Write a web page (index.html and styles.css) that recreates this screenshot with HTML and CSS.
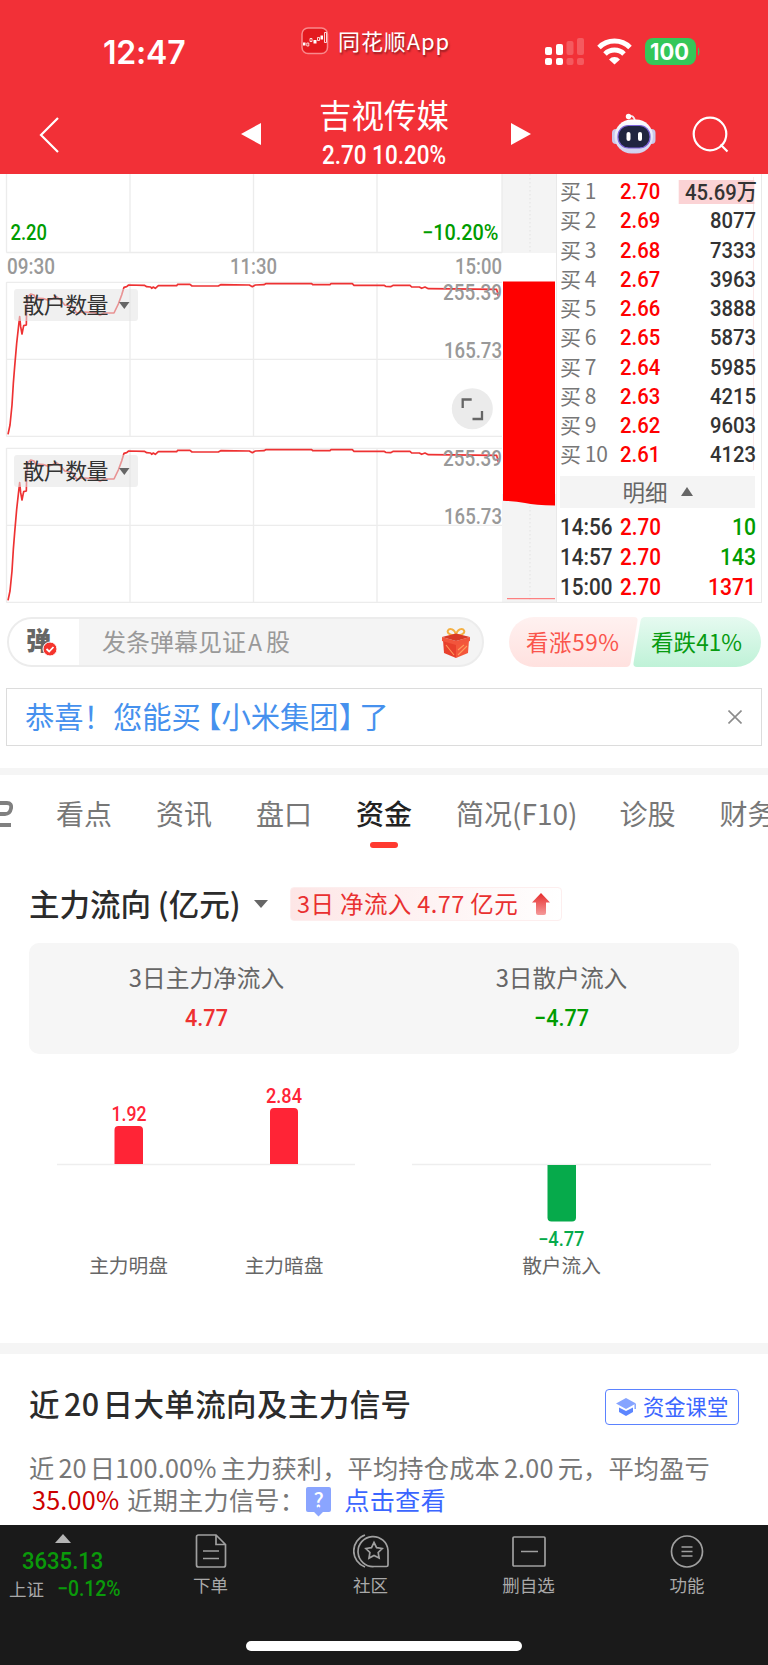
FILE: index.html
```
<!DOCTYPE html>
<html lang="zh-CN">
<head>
    <meta charset="UTF-8">
    <meta name="viewport" content="width=device-width, initial-scale=1.0">
    <title>吉视传媒</title>
    <link rel="stylesheet" href="styles.css">
</head>
<body>
    <header class="header">
        <div class="status-bar">
            <div class="clock">12:47</div>
            <div class="app-name">
                <svg width="28" height="28" viewBox="0 0 28 28">
                    <rect x="1" y="1" width="25.5" height="25.5" rx="6" fill="#e3191f" stroke="#f9898c" stroke-width="1.5"/>
                    <path d="M2 15.500h2.500v3h-2.500zM12.500 13h3v3.500h-3zM19.500 8.500h2.500v4h-2.500z" fill="#fff"/>
                    <path d="M5.800 16h2v3h-2zM9 11.500h2v3h-2zM16.500 10.500h2v3h-2zM23.500 5.500h2v10h-2z" fill="none" stroke="#fff" stroke-width=".8"/>
                </svg>
                <span>同花顺App</span>
            </div>
            <svg class="status-icons" width="160" height="32" viewBox="0 0 160 32">
                <g fill="#fff">
                    <rect x="5" y="11" width="7" height="8" rx="2"/>
                    <rect x="16" y="8" width="7" height="11" rx="2"/>
                    <rect x="5" y="22" width="7" height="7" rx="2"/>
                    <rect x="16" y="22" width="7" height="7" rx="2"/>
                    <g opacity=".2">
                        <rect x="26.500" y="5" width="7" height="14" rx="2"/>
                        <rect x="37" y="2" width="7" height="17" rx="2"/>
                        <rect x="26.500" y="22" width="7" height="7" rx="2"/>
                        <rect x="37" y="22" width="7" height="7" rx="2"/>
                    </g>
                </g>
                <g fill="none" stroke="#fff" stroke-width="5">
                    <path d="M59 11.500a22 22 0 0 1 31 0"/>
                    <path d="M65 18a13.500 13.500 0 0 1 19 0"/>
                </g>
                <path d="M69 23.500a7.500 7.500 0 0 1 11 0l-5.500 5z" fill="#fff"/>
                <rect x="105" y="2" width="51" height="27" rx="8" fill="#34c759"/>
                <path d="M158 11q3 4.500 0 9z" fill="#34c759"/>
                <text class="battery" x="110" y="24" textLength="39" lengthAdjust="spacingAndGlyphs">100</text>
            </svg>
        </div>
        <nav class="title-bar">
            <svg class="back" width="24" height="40" viewBox="0 0 24 40">
                <path d="M21 3 4 20l17 17" fill="none" stroke="#fff" stroke-width="2.200"/>
            </svg>
            <svg class="prev" width="20" height="22" viewBox="0 0 20 22"><path d="M0 11 20 0v22z" fill="#fff"/></svg>
            <div class="stock">
                <div class="stock-name">吉视传媒</div>
                <div class="stock-price">2.70 10.20%</div>
            </div>
            <svg class="next" width="20" height="22" viewBox="0 0 20 22"><path d="M20 11 0 0v22z" fill="#fff"/></svg>
            <svg class="robot" width="44" height="42" viewBox="0 0 44 42">
                <defs>
                    <linearGradient id="shell" x1="0" y1="0" x2="0" y2="1">
                        <stop offset="0" stop-color="#fff"/>
                        <stop offset="1" stop-color="#cfd0ee"/>
                    </linearGradient>
                </defs>
                <path d="M17 3q5-1 6 5" fill="none" stroke="#f3e6ee" stroke-width="1.800"/>
                <circle cx="16.500" cy="3.500" r="2.700" fill="#fff"/>
                <rect x="0" y="16" width="8" height="15" rx="4" fill="#c9c9ea"/>
                <rect x="35.500" y="16" width="8" height="15" rx="4" fill="#c9c9ea"/>
                <rect x="2.500" y="6.500" width="38.500" height="34" rx="17" fill="url(#shell)"/>
                <rect x="6" y="12.500" width="32" height="22.500" rx="10.500" fill="#20253f" stroke="#7d63d8" stroke-width="1.200"/>
                <rect x="14.500" y="19" width="4" height="9" rx="2" fill="#fff"/>
                <rect x="26" y="19" width="4" height="9" rx="2" fill="#fff"/>
            </svg>
            <svg class="search" width="40" height="40" viewBox="0 0 40 40" fill="none" stroke="#fff" stroke-width="2.200">
                <circle cx="19" cy="19" r="16.300"/>
                <path d="m29.500 29.500 7 7"/>
            </svg>
        </nav>
    </header>

    <section class="quote">
        <svg class="chart" width="556" height="430" viewBox="0 0 556 430">
            <defs>
                <g id="panel">
                    <path d="M6.500 108.300H502M6.500 185.300H502M6.500 262.300H502M6.500 108v154.500M130 108v154.500M253.500 108v154.500M377 108v154.500" fill="none" stroke="#ececec" stroke-width="1.300"/>
                    <polyline transform="translate(0 -4) scale(.33333)" fill="none" stroke="#ee3233" stroke-width="5" stroke-linejoin="round" points="24,793 30,765 36,705 40,640 44,590 50,520 55,475 59,440 62,470 66,492 71,467 79,465 80,420 84,380 92,372 102,375 106,384 130,386 145,391 158,386 168,379 182,390 194,405 215,408 230,429 250,426 285,428 300,436 312,429 342,429 355,402 365,375 372,352 380,350 386,345 433,346 440,350 452,351 455,355 460,351 466,355 475,347 530,347 533,343 570,343 576,348 655,348 662,344 748,345 757,350 766,345 792,344 797,341 935,341 938,344 990,344 993,341 1057,341 1062,346 1152,346 1157,349 1172,350 1180,346 1230,346 1235,351 1258,351 1265,355 1275,351 1285,356 1490,358 1495,378"/>
                    <rect x="14" y="115" width="124" height="32" rx="3" fill="#e4e4e4" fill-opacity=".55"/>
                    <text class="tag" x="22.500" y="139" textLength="86">散户数量</text>
                    <path d="M119 128h10.500l-5.200 7z" fill="#666"/>
                    <text class="axis" x="443" y="125.500" textLength="59" lengthAdjust="spacingAndGlyphs">255.39</text>
                    <text class="axis" x="444" y="183.500" textLength="58" lengthAdjust="spacingAndGlyphs">165.73</text>
                </g>
            </defs>
            <!-- after-hours column -->
            <path d="M502 0h54v79h-54zM502 320h54v108h-54z" fill="#f4f4f4"/>
            <path d="M530 0v79M530 320v108" stroke="#e2e2e2" stroke-dasharray="1.500 2.500"/>
            <path d="M6.500 0v78.500M130 0v78.500M253.500 0v78.500M377 0v78.500M502 0v78.500M6.500 78.500H502" stroke="#ececec" stroke-width="1.300"/>
            <text class="axis down" x="10.500" y="66" textLength="36.500" lengthAdjust="spacingAndGlyphs">2.20</text>
            <text class="axis down" x="422" y="66" textLength="76.500" lengthAdjust="spacingAndGlyphs">−10.20%</text>
            <text class="axis" x="7" y="100" textLength="48" lengthAdjust="spacingAndGlyphs">09:30</text>
            <text class="axis" x="230" y="100" textLength="47" lengthAdjust="spacingAndGlyphs">11:30</text>
            <text class="axis" x="455" y="100" textLength="47" lengthAdjust="spacingAndGlyphs">15:00</text>
            <use href="#panel"/>
            <use href="#panel" y="166"/>
            <path d="M503 107.500h52v224q-20-.5-30-2.500t-22-2.300z" fill="#f00"/>
            <path d="M507 424.700h48" stroke="#f66"/>
            <path d="M502 428.300h54" stroke="#e6e6e6"/>
            <circle cx="472.300" cy="234.700" r="20.500" fill="#ebebeb"/>
            <path d="M462.700 234v-8.500h9M482 237v8h-9.500" fill="none" stroke="#666" stroke-width="2.300"/>
        </svg>
        <div class="book">
            <div class="bids">
                <div class="bid"><span>买 1</span><b>2.70</b><i class="big">45.69万</i></div>
                <div class="bid"><span>买 2</span><b>2.69</b><i>8077</i></div>
                <div class="bid"><span>买 3</span><b>2.68</b><i>7333</i></div>
                <div class="bid"><span>买 4</span><b>2.67</b><i>3963</i></div>
                <div class="bid"><span>买 5</span><b>2.66</b><i>3888</i></div>
                <div class="bid"><span>买 6</span><b>2.65</b><i>5873</i></div>
                <div class="bid"><span>买 7</span><b>2.64</b><i>5985</i></div>
                <div class="bid"><span>买 8</span><b>2.63</b><i>4215</i></div>
                <div class="bid"><span>买 9</span><b>2.62</b><i>9603</i></div>
                <div class="bid"><span>买 10</span><b>2.61</b><i>4123</i></div>
            </div>
            <div class="detail">明细
                <svg width="12" height="9" viewBox="0 0 12 9"><path d="M0 9 6 0l6 9z" fill="#666"/></svg>
            </div>
            <div class="trade"><span>14:56</span><b>2.70</b><i class="down">10</i></div>
            <div class="trade"><span>14:57</span><b>2.70</b><i class="down">143</i></div>
            <div class="trade"><span>15:00</span><b>2.70</b><i class="up">1371</i></div>
        </div>
    </section>

    <section class="barrage">
        <div class="barrage-input">
            <div class="barrage-switch">弹
                <svg class="check" width="16" height="16" viewBox="0 0 16 16">
                    <circle cx="8" cy="8" r="7" fill="#f5352d" stroke="#fff"/>
                    <path d="m4.500 8 2.700 2.500 4.300-4.500" fill="none" stroke="#fff" stroke-width="1.800"/>
                </svg>
            </div>
            <div class="barrage-hint">发条弹幕见证<span>A</span>股</div>
            <svg class="gift" width="30" height="32" viewBox="0 0 30 32">
                <path d="M15 8C10 8.500 5.500 6.500 7 3.500s7-1.500 8 4.500c1-6 6.500-7.500 8-4.500s-3 5-8 4.500z" fill="none" stroke="#f4b043" stroke-width="2"/>
                <path d="m2 13 13 4v14L3 26z" fill="#e8402c"/>
                <path d="m28 13-13 4v14l12-5z" fill="#f4573b"/>
                <path d="M1 10v4l14 4 14-4v-4l-14 4z" fill="#f2553c"/>
                <path d="m1 10 14 4 14-4-14-3.500z" fill="#d93a26"/>
                <path d="m17 28 9-9M17 23l6-5M5 18l8 10" stroke="#ff9a5c" stroke-width="1.100"/>
            </svg>
        </div>
        <svg class="vote" width="254" height="50" viewBox="0 0 254 50">
            <defs>
                <linearGradient id="bull" x1="0" y1="0" x2="0" y2="1">
                    <stop offset="0" stop-color="#fff1f0"/>
                    <stop offset="1" stop-color="#ffe1df"/>
                </linearGradient>
                <linearGradient id="bear" x1="0" y1="0" x2="0" y2="1">
                    <stop offset="0" stop-color="#e6faf0"/>
                    <stop offset="1" stop-color="#bff2d7"/>
                </linearGradient>
            </defs>
            <path d="M25 0h100q4 0 3.500 4l-7 42q-.8 4-4.500 4H25a25 25 0 0 1 0-50z" fill="url(#bull)"/>
            <path d="M136 0h91a25 25 0 0 1 0 50H128q-4 0-3.500-4l7-42q.8-4 4.500-4z" fill="url(#bear)"/>
            <text class="bull" x="17" y="33.500" textLength="93">看涨59%</text>
            <text class="bear" x="142" y="33.500" textLength="91">看跌41%</text>
        </svg>
    </section>

    <section class="notice">
        <div>恭喜！您能买<span class="open">【</span>小米集团<span class="close">】</span>了</div>
        <svg width="14" height="14" viewBox="0 0 14 14"><path d="m.5.5 13 13M13.500.5l-13 13" stroke="#8c8c8c" stroke-width="1.600"/></svg>
    </section>

    <nav class="tabs">
        <div class="tab ai"><svg width="13" height="26" viewBox="0 0 13 26"><path d="M-4 2H7q5 0 4 5.500t-6 5.500H-4M-4 24H11" fill="none" stroke="#808080" stroke-width="3.800"/></svg></div>
        <div class="tab">看点</div>
        <div class="tab">资讯</div>
        <div class="tab">盘口</div>
        <div class="tab active">资金</div>
        <div class="tab f10">简况(F10)</div>
        <div class="tab">诊股</div>
        <div class="tab">财务</div>
    </nav>

    <section class="flow">
        <div class="flow-head">
            <h2>主力流向 (亿元)</h2>
            <svg class="caret" width="14" height="8" viewBox="0 0 14 8"><path d="M0 0h14L7 8z" fill="#666"/></svg>
            <div class="flow-tag">
                <span>3日 净流入 4.77 亿元</span>
                <svg width="18" height="22" viewBox="0 0 18 22">
                    <defs>
                        <linearGradient id="arrow" x1="0" y1="0" x2="0" y2="1">
                            <stop offset="0" stop-color="#e62c2c"/>
                            <stop offset="1" stop-color="#f59a9a"/>
                        </linearGradient>
                    </defs>
                    <path d="m9 0 9 9.500h-4V20q0 2-2 2H6q-2 0-2-2V9.500H0z" fill="url(#arrow)"/>
                </svg>
            </div>
        </div>
        <div class="summary">
            <div><p>3日主力净流入</p><strong class="red">4.77</strong></div>
            <div><p>3日散户流入</p><strong class="down">−4.77</strong></div>
        </div>
        <svg class="bars" width="768" height="220" viewBox="0 0 768 220">
            <path d="M57 90.500h298M412 90.500h299" stroke="#eeeeee" stroke-width="1.500"/>
            <path d="M114.500 90V56q0-4 4-4H139q4 0 4 4v34zM270 90V38q0-4 4-4h20q4 0 4 4v52z" fill="#ff2436"/>
            <path d="M547.500 91v52.500q0 4 4 4H572q4 0 4-4V91z" fill="#06aa4b"/>
            <g class="bar-value">
                <text x="111.500" y="47" textLength="35" lengthAdjust="spacingAndGlyphs" fill="#ff2436">1.92</text>
                <text x="266" y="28.500" textLength="36" lengthAdjust="spacingAndGlyphs" fill="#ff2436">2.84</text>
                <text x="538" y="171.500" textLength="46.500" lengthAdjust="spacingAndGlyphs" fill="#06aa4b">−4.77</text>
            </g>
            <g class="bar-name">
                <text x="128.500" y="199">主力明盘</text>
                <text x="284" y="199">主力暗盘</text>
                <text x="561.500" y="199">散户流入</text>
            </g>
        </svg>
    </section>

    <section class="signal">
        <div class="signal-head">
            <h2>近<span>20</span>日大单流向及主力信号</h2>
            <div class="lesson">
                <svg width="20" height="18" viewBox="0 0 20 18">
                    <path d="m10 0 10 5.500L10 11 0 5.500z" fill="#86a4ff"/>
                    <path d="M3 9.500 10 13l7-3.500V14l-7 4-7-4z" fill="#5d86ff"/>
                    <path d="M19.200 6v5" stroke="#86a4ff" stroke-width="1.500"/>
                </svg>
                <span>资金课堂</span>
            </div>
        </div>
        <p class="signal-text">近<span class="num">20</span>日100.00%<span class="gap"></span>主力获利，平均持仓成本<span class="gap"></span>2.00<span class="gap"></span>元，平均盈亏</p>
        <p class="signal-text second"><em>35.00%</em><span class="label">近期主力信号：</span><span class="help">?</span><a>点击查看</a></p>
    </section>

    <footer class="toolbar">
        <div class="index">
            <svg width="16" height="9" viewBox="0 0 16 9"><path d="M0 9 8 0l8 9z" fill="#b5b5b5"/></svg>
            <div class="index-value">3635.13</div>
            <div class="index-row"><span>上证</span><b>−0.12%</b></div>
        </div>
        <div class="tool order">
            <svg width="32" height="34" viewBox="0 0 32 34">
                <path d="M3.500 1H21l9.500 9.500V31q0 2-2 2H3.500q-2 0-2-2V3q0-2 2-2zM21 1v9.500h9.500M8 17h16M8 24.500h16"/>
            </svg>
            <span>下单</span>
        </div>
        <div class="tool club">
            <svg width="36" height="34" viewBox="0 0 36 34">
                <path d="M12 1A17 17 0 0 0 12 33M21 32.500a15 15 0 1 1 14-16V31q0 1.500-1.500 1.500zM21 8.500l2.600 5.200 5.600.8-4 4 .9 5.600-5.100-2.600-5 2.600.9-5.600-4-4 5.600-.8z"/>
            </svg>
            <span>社区</span>
        </div>
        <div class="tool remove">
            <svg width="36" height="34" viewBox="0 0 36 34">
                <path d="M3 3h30q1 0 1 1v27q0 1-1 1H3q-1 0-1-1V4q0-1 1-1zM10 17.500h17"/>
            </svg>
            <span>删自选</span>
        </div>
        <div class="tool more">
            <svg width="34" height="34" viewBox="0 0 34 34">
                <circle cx="17" cy="17.500" r="15.500"/>
                <path d="M11.500 13h11M11.500 17.500h11M11.500 22h11"/>
            </svg>
            <span>功能</span>
        </div>
        <div class="home-indicator"></div>
    </footer>
</body>
</html>
```

FILE: styles.css
```
* {
    box-sizing: border-box;
}

body {
    margin: 0;
    width: 768px;
    height: 1665px;
    overflow: hidden;
    background-color: #fff;
    color: #333;
    font-family: "Noto Sans CJK SC", sans-serif;
}

svg {
    display: block;
    flex: none;
}

h2, p {
    margin: 0;
}

b, i, em, strong {
    font-style: normal;
    font-weight: 500;
}

.down {
    color: #009c00;
    fill: #009c00;
}

.up {
    color: #f00;
}

.red {
    color: #ee3030;
}

/* header */
.header {
    height: 174px;
    background-color: #f23037;
    color: #fff;
}

.status-bar {
    display: flex;
    height: 90px;
    padding-top: 27px;
}

.clock {
    width: 198px;
    margin-left: 103px;
    padding-top: 6px;
    font: 600 32px/40px Inter, sans-serif;
    letter-spacing: -0.2px;
}

.app-name {
    display: flex;
    width: 239px;
    height: 28px;
    align-items: center;
    gap: 9px;
    font-size: 22px;
    letter-spacing: 0.9px;
    line-height: 28px;
    text-shadow: 1px 2px 2px rgba(0, 0, 0, 0.4);
}

.app-name span {
    margin-top: -3px;
}

.status-icons {
    margin-top: 9px;
}

.battery {
    font: 700 23px Inter, sans-serif;
    fill: #fff;
}

.title-bar {
    display: flex;
    height: 84px;
    padding-left: 37px;
}

.back {
    margin-top: 25px;
}

.prev {
    margin: 33px 0 0 180px;
}

.stock {
    width: 246px;
    margin-right: 4px;
    text-align: center;
}

.stock-name {
    margin-top: 2px;
    font-size: 32.5px;
    line-height: 44px;
}

/* narrow digits */
.stock-price, .bid b, .bid i, .trade span, .trade b, .trade i,
.summary strong, .index-value, .index-row b {
    transform: scaleX(0.9);
    transform-origin: left center;
}

.stock-price {
    margin-top: 2px;
    font: 500 25px/36px Roboto, sans-serif;
    transform-origin: center;
}

.next {
    margin-top: 33px;
}

.robot {
    margin: 23px 0 0 81px;
}

.search {
    margin: 25px 0 0 35px;
}

/* quote */
.quote {
    display: flex;
    height: 430px;
}

.axis {
    font: 500 21.5px Roboto, sans-serif;
    fill: #999;
}

.axis.down {
    fill: #009c00;
}

.tag {
    font-size: 22px;
    fill: #333;
}

.book {
    width: 206px;
    height: 429px;
    padding: 3px 4px 0 3px;
    border: 1px solid #e9e9e9;
    border-top: 0;
}

.bids {
    width: 194px;
    border-right: 1px solid #fce9ea;
}

.bid, .trade {
    display: grid;
    grid-template-columns: 60px 50px 1fr;
    width: 196px;
    height: 29.25px;
    align-items: center;
    font: 500 22.5px/29px Roboto, "Noto Sans CJK SC", sans-serif;
}

.bid span {
    margin-top: -3px;
    color: #777;
    font: 400 21px/28px "Noto Sans CJK SC", sans-serif;
    word-spacing: -1px;
    white-space: nowrap;
}

.bid b, .trade b {
    color: #f00;
}

.bid i, .trade i {
    text-align: right;
    transform-origin: right center;
}

.bid .big {
    justify-self: end;
    width: 87px;
    height: 24px;
    line-height: 25px;
    white-space: nowrap;
    background: linear-gradient(#fbd3d5, #fbd3d5) no-repeat 0 0 / 84px 24px;
}

.detail {
    display: flex;
    align-items: center;
    justify-content: center;
    gap: 13px;
    width: 195px;
    height: 32px;
    margin: 6.5px 0 4px;
    padding-bottom: 2px;
    background-color: #f4f4f4;
    color: #666;
    font-size: 22.5px;
    line-height: 30px;
}

.trade {
    height: 30.4px;
    font-size: 23.5px;
}

.trade span, .trade b {
    transform: scaleX(0.88);
}

/* barrage */
.barrage {
    display: flex;
    height: 84px;
    padding: 13px 0 0 7px;
}

.barrage-input {
    display: flex;
    width: 477px;
    height: 50px;
    margin-right: 25px;
    border: 2px solid #ececec;
    border-radius: 25px;
    background-color: #f4f4f4;
    overflow: hidden;
}

.barrage-switch {
    position: relative;
    width: 70px;
    padding-left: 17px;
    background-color: #fff;
    color: #666;
    font-size: 25px;
    font-weight: 900;
    line-height: 40px;
}

.check {
    position: absolute;
    left: 33px;
    top: 22px;
}

.barrage-hint {
    width: 361px;
    padding-left: 23px;
    color: #999;
    font-size: 24px;
    line-height: 44px;
}

.barrage-hint span {
    margin: 0 4px 0 2px;
    font-size: 23px;
}

.gift {
    margin-top: 8px;
    margin-left: 1px;
}

.bull, .bear {
    font-size: 22.5px;
    fill: #fa554c;
}

.bear {
    fill: #079b11;
}

/* notice */
.notice {
    display: flex;
    align-items: center;
    justify-content: space-between;
    width: 756px;
    height: 58px;
    margin-left: 6px;
    padding: 0 19px 0 18px;
    border: 1px solid #dcdcdc;
    color: #4691ee;
    font-size: 29.3px;
    line-height: 54px;
    white-space: nowrap;
}

.notice div {
    margin-top: -4px;
}

/* half-width brackets */
.notice .open, .notice .close {
    font-feature-settings: "halt";
}

.notice .open {
    margin-left: 6px;
}

.notice .close {
    margin-right: 6px;
}

/* tabs */
.tabs {
    display: flex;
    gap: 44px;
    height: 100px;
    margin-top: 22px;
    border-top: 7px solid #f5f5f5;
    color: #777;
    font-size: 28px;
    line-height: 76px;
    white-space: nowrap;
}

.tab.ai {
    width: 12px;
    padding-top: 26px;
}

.tab.active {
    color: #222;
    font-weight: 500;
}

.tab.active::after {
    content: "";
    display: block;
    width: 28px;
    height: 6px;
    margin: -9px auto 0;
    border-radius: 3px;
    background-color: #ff3a30;
}

.tab.f10 {
    margin-right: -2px;
}

/* capital flow */
.flow {
    height: 475px;
}

.flow-head {
    display: flex;
    align-items: center;
    height: 72px;
    padding-left: 29px;
}

h2 {
    color: #2b2b2b;
    font-size: 30.5px;
    font-weight: 500;
    line-height: 44px;
    white-space: nowrap;
}

.flow-head h2 {
    width: 225px;
    margin-top: -3px;
}

.flow-tag {
    display: flex;
    align-items: center;
    justify-content: space-between;
    width: 272px;
    height: 34px;
    margin-left: 22px;
    padding: 0 11px 0 6px;
    border: 1px solid #fdeeee;
    border-radius: 4px;
    background: linear-gradient(90deg, #fde6e6, #fff);
    color: #e93030;
    font-size: 23.5px;
    letter-spacing: 0.4px;
    line-height: 30px;
    white-space: nowrap;
}

.flow-tag span {
    margin-top: -3px;
}

.summary {
    display: grid;
    grid-template-columns: 1fr 1fr;
    width: 710px;
    height: 111px;
    margin: 3px 0 0 29px;
    padding-top: 17px;
    border-radius: 10px;
    background-color: #f6f6f6;
    color: #666;
    font-size: 23.7px;
    line-height: 36px;
    text-align: center;
}

.summary p {
    margin-top: -1px;
}

.summary strong {
    display: block;
    margin-top: 5px;
    font: 500 24px/36px Roboto, sans-serif;
    transform-origin: center;
}

.bars {
    margin-top: 20px;
}

.bar-value {
    font: 500 19.5px Roboto, sans-serif;
}

.bar-name {
    font-size: 19.7px;
    fill: #666;
    text-anchor: middle;
}

/* signal */
.signal {
    height: 182px;
    border-top: 11px solid #f5f5f5;
    padding: 29px 29px 0;
}

.signal-head {
    display: flex;
    justify-content: space-between;
    height: 68px;
}

.signal-head h2 {
    margin-top: -2px;
    letter-spacing: 0.4px;
}

.signal-head h2 span {
    margin: 0 3px 0 4px;
}

.lesson {
    display: flex;
    align-items: center;
    gap: 7px;
    width: 134px;
    height: 36px;
    margin-top: 6px;
    padding-left: 10px;
    border: 1.5px solid #5b82ff;
    border-radius: 4px;
    color: #3b66ff;
    font-size: 21.3px;
    line-height: 30px;
    white-space: nowrap;
}

.lesson span {
    margin-top: -2px;
}

.signal-text {
    display: flex;
    align-items: center;
    height: 32px;
    color: #777;
    font-size: 25.2px;
    letter-spacing: 0.2px;
    line-height: 32px;
    white-space: nowrap;
}

.num {
    margin: 0 3px 0 4px;
}

.gap {
    width: 4px;
}

.signal-text em {
    margin-left: 3px;
    color: #c00;
    font-weight: 400;
}

.signal-text .label {
    width: 179px;
    margin-left: 8px;
}

.help {
    width: 25px;
    height: 25px;
    margin-right: 13px;
    background-color: #8aa5ff;
    border-radius: 2px;
    color: #fff;
    font-size: 21px;
    font-weight: 500;
    line-height: 24px;
    text-align: center;
}

.help::after {
    content: "";
    display: block;
    width: 7px;
    height: 7px;
    margin: -3px auto 0;
    background-color: #8aa5ff;
    transform: rotate(45deg);
}

.signal-text a {
    color: #3b66ff;
}

/* toolbar */
.toolbar {
    position: relative;
    display: flex;
    height: 140px;
    padding-top: 9px;
    background-color: #1a1a1a;
    color: #a9a9a9;
    font-size: 17.5px;
}

.index {
    width: 136px;
}

.index svg {
    margin-left: 55px;
}

.index-value {
    margin-left: 22px;
    color: #0a9a0a;
    font: 500 24.5px/35px Roboto, sans-serif;
}

.index-row {
    display: flex;
    height: 24px;
    padding-left: 9px;
    gap: 13px;
    line-height: 22px;
}

.index-row b {
    color: #0a9a0a;
    font: 500 21.5px/22px Roboto, sans-serif;
}

.tool {
    display: flex;
    flex: none;
    flex-direction: column;
    align-items: center;
}

.tool svg {
    fill: none;
    stroke: #a0a0a0;
    stroke-width: 1.7;
}

.tool span {
    margin-top: 4px;
    line-height: 26px;
}

.order {
    width: 149px;
}

.club {
    width: 171px;
}

.remove {
    width: 145px;
}

.more {
    width: 100px;
    margin-left: 36px;
}

.home-indicator {
    position: absolute;
    left: 246px;
    bottom: 14px;
    width: 276px;
    height: 10px;
    border-radius: 5px;
    background-color: #fff;
}
```
